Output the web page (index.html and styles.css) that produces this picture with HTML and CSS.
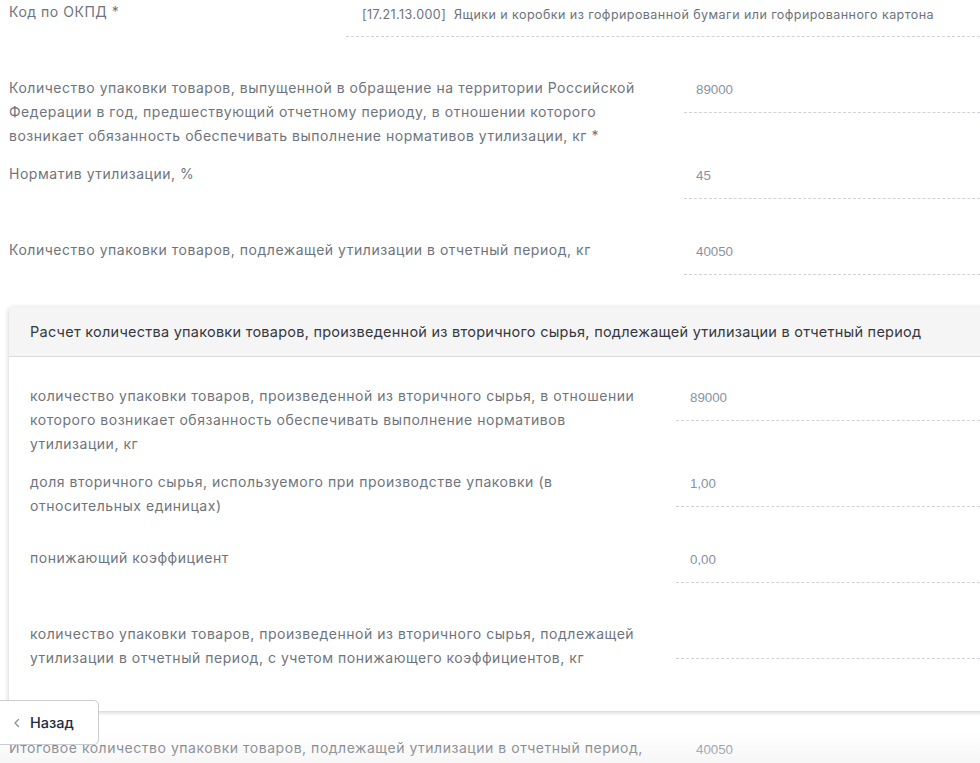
FILE: index.html
```html
<!DOCTYPE html>
<html lang="ru">
<head>
<meta charset="utf-8">
<title>Форма</title>
<link rel="stylesheet" href="styles.css">
</head>
<body>
<div class="page">
  <div class="row row-okpd">
    <div class="label label-okpd">Код по ОКПД *</div>
    <div class="field field-okpd">[17.21.13.000]&nbsp; Ящики и коробки из гофрированной бумаги или гофрированного картона</div>
  </div>
  <div class="row">
    <div class="label">Количество упаковки товаров, выпущенной в обращение на территории Российской Федерации в год, предшествующий отчетному периоду, в отношении которого возникает обязанность обеспечивать выполнение нормативов утилизации, кг *</div>
    <div class="field">89000</div>
  </div>
  <div class="row">
    <div class="label">Норматив утилизации, %</div>
    <div class="field">45</div>
  </div>
  <div class="row">
    <div class="label">Количество упаковки товаров, подлежащей утилизации в отчетный период, кг</div>
    <div class="field">40050</div>
  </div>

  <section class="panel">
    <div class="panel-head">Расчет количества упаковки товаров, произведенной из вторичного сырья, подлежащей утилизации в отчетный период</div>
    <div class="panel-body">
      <div class="row">
        <div class="label">количество упаковки товаров, произведенной из вторичного сырья, в отношении которого возникает обязанность обеспечивать выполнение нормативов утилизации, кг</div>
        <div class="field">89000</div>
      </div>
      <div class="row">
        <div class="label">доля вторичного сырья, используемого при производстве упаковки (в относительных единицах)</div>
        <div class="field">1,00</div>
      </div>
      <div class="row">
        <div class="label">понижающий коэффициент</div>
        <div class="field">0,00</div>
      </div>
      <div class="row">
        <div class="label">количество упаковки товаров, произведенной из вторичного сырья, подлежащей утилизации в отчетный период, с учетом понижающего коэффициентов, кг</div>
        <div class="field"></div>
      </div>
    </div>
  </section>

  <div class="row">
    <div class="label">Итоговое количество упаковки товаров, подлежащей утилизации в отчетный период, кг</div>
    <div class="field">40050</div>
  </div>
</div>

<div class="bottom-fade"></div>
<button class="back" type="button">
  <svg class="back-icon" width="8" height="12" viewBox="0 0 8 12"><path d="M5.5 2.5 L2 6 L5.5 9.5" fill="none" stroke="#8a9099" stroke-width="1.4" stroke-linecap="round" stroke-linejoin="round"/></svg>
  <span>Назад</span>
</button>
</body>
</html>
```
FILE: styles.css
```css
html, body {
  margin: 0;
  padding: 0;
  background: #ffffff;
  overflow: hidden;
}
body {
  font-family: "Inter", "Noto Sans", sans-serif;
  font-size: 14px;
  color: #6d727a;
  height: 763px;
}
.page {
  width: 991px;
  padding-left: 9px;
}
.row {
  display: flex;
  gap: 25px;
  min-height: 62px;
  margin-bottom: 14px;
}
.label {
  width: 650px;
  flex: none;
  line-height: 24px;
  letter-spacing: 0.53px;
  color: #6f747c;
}
.field {
  flex: 1;
  padding: 4px 12px 0;
  box-sizing: border-box;
  height: 37px;
  line-height: 20px;
  border-bottom: 1px dashed #cfd3d9;
  font-family: "Liberation Sans", Arial, sans-serif;
  font-size: 13.3px;
  color: #8a929e;
}
.label-okpd {
  width: 312px;
}
.field-okpd {
  font-family: "Inter", "Noto Sans", sans-serif;
  font-size: 12.5px;
  letter-spacing: 0.44px;
  padding: 5px 16px 0;
  color: #6d727a;
}
.panel {
  margin-top: -7px;
  margin-bottom: 25px;
  background: #fff;
  border-radius: 4px 0 0 4px;
  box-shadow: 0 1px 5px rgba(0, 0, 0, 0.22);
}
.panel-head {
  height: 49px;
  line-height: 49px;
  padding: 0 21px;
  background: #f5f5f5;
  border-bottom: 1px solid #dcdcdc;
  border-radius: 4px 0 0 0;
  color: #35383d;
  font-size: 14.5px;
  letter-spacing: 0.25px;
  white-space: nowrap;
}
.panel-body {
  padding: 27px 20px 13px 21px;
}
.panel-body .row {
  gap: 21px;
}
.panel-body .label {
  width: 625px;
}
.panel-body .field {
  padding-left: 14px;
}
.bottom-fade {
  position: fixed;
  left: 0;
  right: 0;
  bottom: 0;
  height: 30px;
  background: linear-gradient(to bottom, rgba(238, 238, 238, 0), rgba(236, 236, 236, 0.45));
  pointer-events: none;
}
.back {
  position: fixed;
  left: -6px;
  top: 700px;
  width: 105px;
  height: 45px;
  display: flex;
  align-items: center;
  gap: 9px;
  padding: 0 0 0 18px;
  background: #fff;
  border: 1px solid #c9cdd3;
  border-radius: 5px;
  font-family: "Inter", "Noto Sans", sans-serif;
  font-size: 14.5px;
  font-weight: 500;
  color: #1d2a45;
  cursor: pointer;
}
.back-icon {
  flex: none;
}
```
